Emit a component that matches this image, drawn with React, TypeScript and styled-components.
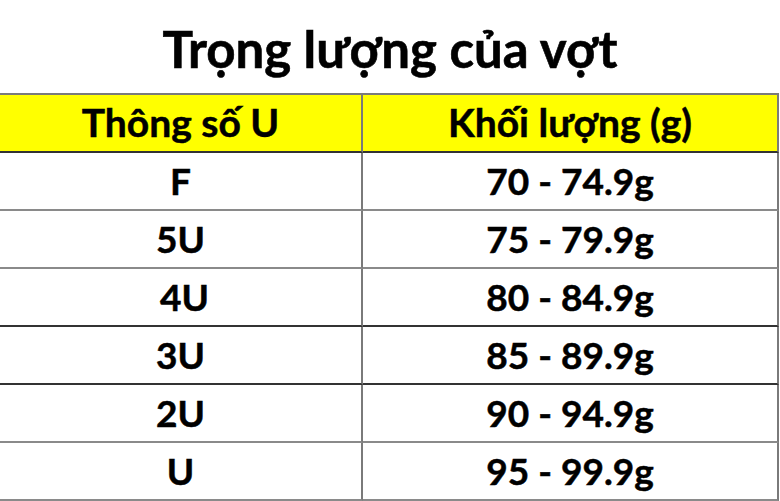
import React from "react";
import styled, { createGlobalStyle } from "styled-components";

const Global = createGlobalStyle`
  html, body { margin: 0; padding: 0; background: #fff; }
  body { font-family: Lato, "Liberation Sans", sans-serif; color: #000; }
`;

const Page = styled.div`
  width: 780px;
  height: 501px;
  overflow: hidden;
  display: flex;
  flex-direction: column;
`;

const Title = styled.h1`
  margin: 0;
  height: 94px;
  display: flex;
  align-items: center;
  justify-content: center;
  font-size: 51px;
  font-weight: 700;
  -webkit-text-stroke: 0.6px #000;
  padding-top: 4px;
  box-sizing: border-box;
`;

const Table = styled.div`
  display: grid;
  grid-template-columns: 363px 416px;
  grid-auto-rows: 58px;
  border-top: 2px solid #7a7a7a;
  width: 779px;
`;

const Cell = styled.div<{ $header?: boolean; $dark?: boolean; $shift?: number }>`
  display: flex;
  align-items: center;
  justify-content: center;
  font-weight: 700;
  font-size: ${(p) => (p.$header ? "39px" : "37px")};
  -webkit-text-stroke: 0.5px #000;
  background: ${(p) => (p.$header ? "#ffff00" : "#fff")};
  border-bottom: 2px solid ${(p) => (p.$header || p.$dark ? "#333" : "#8a8a8a")};
  border-right: 2px solid #7a7a7a;
  box-sizing: border-box;
  padding-left: ${(p) => (p.$shift ? `${p.$shift}px` : "0")};
  padding-bottom: 2px;
`;

const rows: { u: string; w: string; shift?: number; dark?: boolean }[] = [
  { u: "F", w: "70 - 74.9g" },
  { u: "5U", w: "75 - 79.9g" },
  { u: "4U", w: "80 - 84.9g", shift: 8, dark: true },
  { u: "3U", w: "85 - 89.9g", dark: true },
  { u: "2U", w: "90 - 94.9g" },
  { u: "U", w: "95 - 99.9g" },
];

export default function App() {
  return (
    <Page>
      <Global />
      <Title>Trọng lượng của vợt</Title>
      <Table>
        <Cell $header>Thông số U</Cell>
        <Cell $header>Khối lượng (g)</Cell>
        {rows.map((r) => (
          <React.Fragment key={r.u}>
            <Cell $shift={r.shift} $dark={r.dark}>{r.u}</Cell>
            <Cell $dark={r.dark}>{r.w}</Cell>
          </React.Fragment>
        ))}
      </Table>
    </Page>
  );
}
